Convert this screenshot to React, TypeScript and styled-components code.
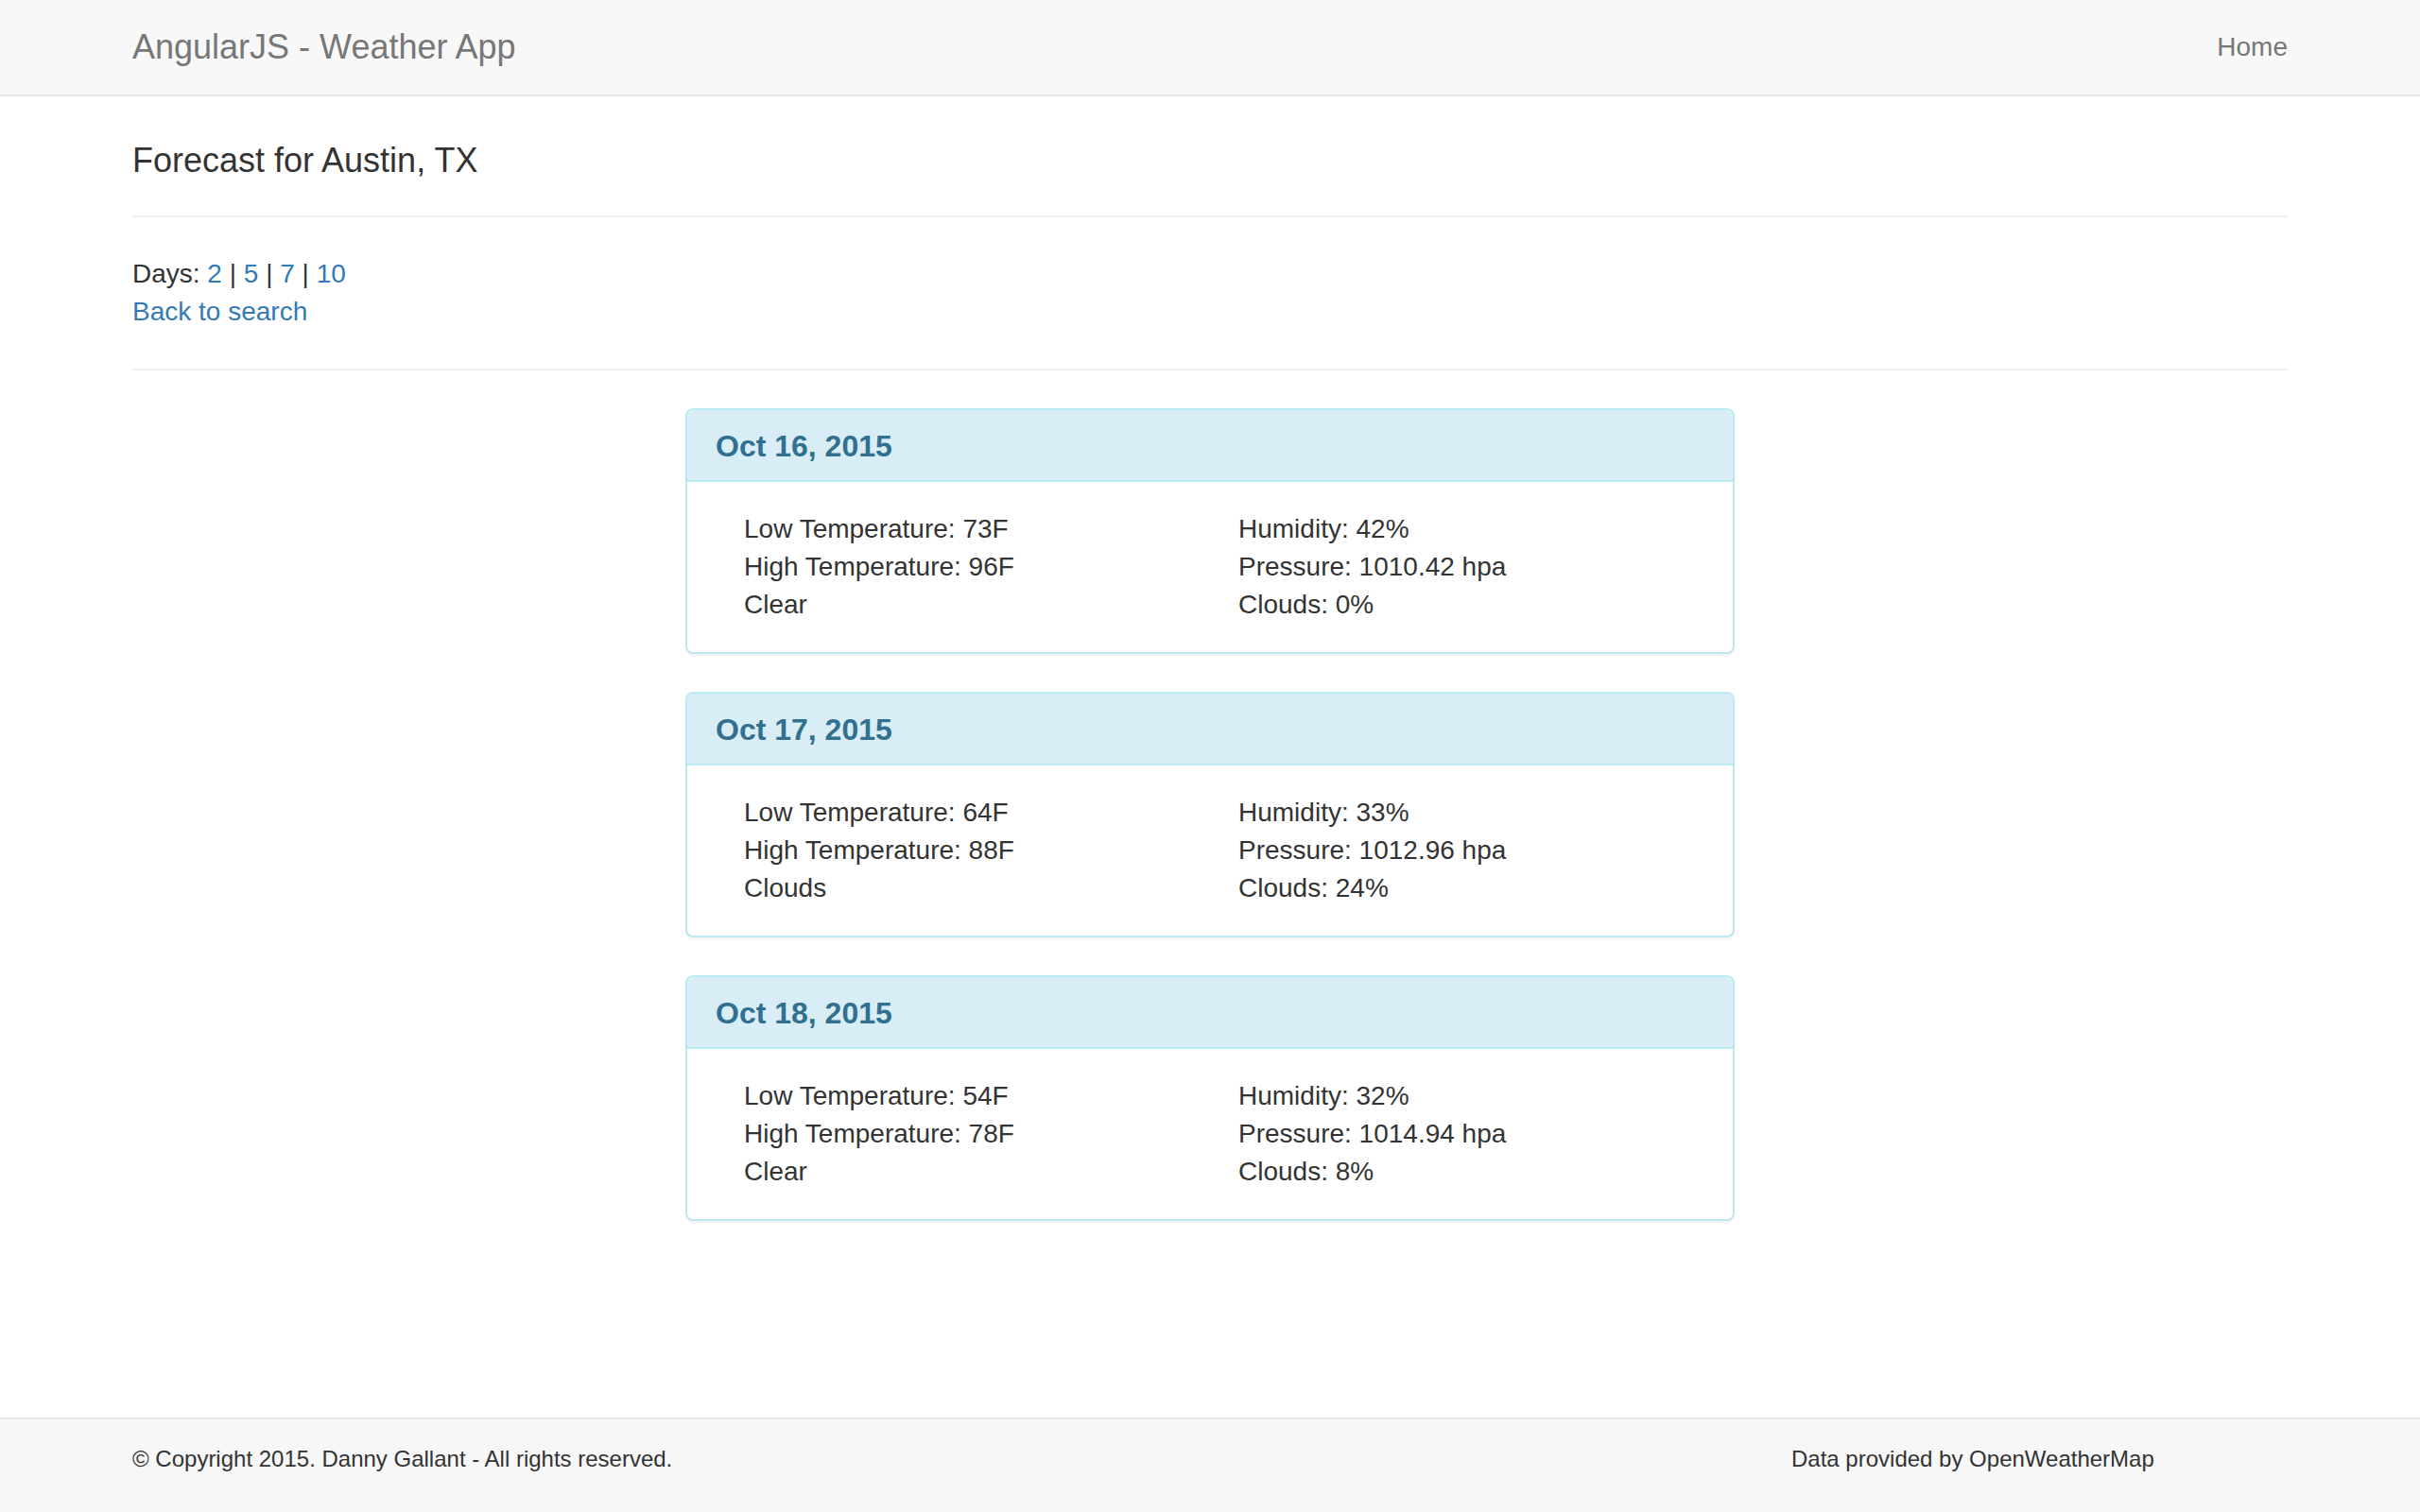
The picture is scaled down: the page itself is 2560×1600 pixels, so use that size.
import styled, { createGlobalStyle } from "styled-components";

const GlobalStyle = createGlobalStyle`
  * {
    box-sizing: border-box;
  }
  html, body {
    margin: 0;
    padding: 0;
  }
  body {
    font-family: "Liberation Sans", Arial, Helvetica, sans-serif;
    font-size: 28px;
    line-height: 40px;
    color: #333;
    background: #fff;
  }
`;

const forecast = [
  { date: "Oct 16, 2015", low: 73, high: 96, desc: "Clear", humidity: 42, pressure: "1010.42", clouds: 0 },
  { date: "Oct 17, 2015", low: 64, high: 88, desc: "Clouds", humidity: 33, pressure: "1012.96", clouds: 24 },
  { date: "Oct 18, 2015", low: 54, high: 78, desc: "Clear", humidity: 32, pressure: "1014.94", clouds: 8 },
];

const dayOptions = [2, 5, 7, 10];

export default function App() {
  return (
    <Page>
      <GlobalStyle />
      <Navbar>
        <Container>
          <NavInner>
            <Brand href="#">AngularJS - Weather App</Brand>
            <NavLink href="#">Home</NavLink>
          </NavInner>
        </Container>
      </Navbar>

      <Main>
        <Container>
          <Heading>Forecast for Austin, TX</Heading>
          <Rule />
          <Options>
            <div>
              Days:{" "}
              {dayOptions.map((d, i) => (
                <span key={d}>
                  <Link href="#">{d}</Link>
                  {i < dayOptions.length - 1 ? " | " : ""}
                </span>
              ))}
            </div>
            <div>
              <Link href="#">Back to search</Link>
            </div>
          </Options>
          <Rule />

          <Panels>
            {forecast.map((f) => (
              <Panel key={f.date}>
                <PanelHeading>
                  <PanelTitle>{f.date}</PanelTitle>
                </PanelHeading>
                <PanelBody>
                  <Col>
                    <div>Low Temperature: {f.low}F</div>
                    <div>High Temperature: {f.high}F</div>
                    <div>{f.desc}</div>
                  </Col>
                  <Col>
                    <div>Humidity: {f.humidity}%</div>
                    <div>Pressure: {f.pressure} hpa</div>
                    <div>Clouds: {f.clouds}%</div>
                  </Col>
                </PanelBody>
              </Panel>
            ))}
          </Panels>
        </Container>
      </Main>

      <Footer>
        <Container>
          <FooterRow>
            <FooterCol>© Copyright 2015. Danny Gallant - All rights reserved.</FooterCol>
            <FooterCol>Data provided by OpenWeatherMap</FooterCol>
          </FooterRow>
        </Container>
      </Footer>
    </Page>
  );
}

const Page = styled.div`
  min-height: 100vh;
  display: flex;
  flex-direction: column;
`;

const Container = styled.div`
  width: 2340px;
  margin: 0 auto;
  padding: 0 30px;
`;

const Navbar = styled.nav`
  background: #f8f8f8;
  border-bottom: 2px solid #e7e7e7;
  height: 102px;
`;

const NavInner = styled.div`
  display: flex;
  justify-content: space-between;
  align-items: flex-start;
`;

const Brand = styled.a`
  font-size: 36px;
  line-height: 40px;
  padding: 30px 0;
  color: #777;
  text-decoration: none;
`;

const NavLink = styled.a`
  font-size: 28px;
  line-height: 40px;
  padding: 30px 0;
  color: #777;
  text-decoration: none;
`;

const Main = styled.main`
  flex: 1;
`;

const Heading = styled.h4`
  font-size: 36px;
  line-height: 40px;
  font-weight: 500;
  margin: 48px 0 38px;
  color: #333;
`;

const Rule = styled.hr`
  border: 0;
  border-top: 2px solid #eee;
  margin: 0;
`;

const Options = styled.div`
  margin: 40px 0;
`;

const Link = styled.a`
  color: #337ab7;
  text-decoration: none;
`;

const Panels = styled.div`
  width: 1110px;
  margin: 40px auto 0;
`;

const Panel = styled.div`
  border: 2px solid #bce8f1;
  border-radius: 8px;
  margin-bottom: 40px;
  background: #fff;
  box-shadow: 0 2px 2px rgba(0, 0, 0, 0.05);
  overflow: hidden;
`;

const PanelHeading = styled.div`
  background: #d9edf7;
  border-bottom: 2px solid #bce8f1;
  padding: 22px 30px 19px;
`;

const PanelTitle = styled.h3`
  margin: 0;
  font-size: 32px;
  line-height: 33px;
  font-weight: 700;
  color: #31708f;
`;

const PanelBody = styled.div`
  padding: 30px;
  display: grid;
  grid-template-columns: 1fr 1fr;
`;

const Col = styled.div`
  padding: 0 30px;
`;

const Footer = styled.footer`
  height: 100px;
  background: #f7f7f7;
  border-top: 2px solid #e5e5e5;
  padding-top: 25px;
`;

const FooterRow = styled.div`
  display: grid;
  grid-template-columns: 9fr 3fr;
  margin: 0 -30px;
`;

const FooterCol = styled.div`
  padding: 0 30px;
  font-size: 24px;
  line-height: 34px;
  color: #333;
`;
